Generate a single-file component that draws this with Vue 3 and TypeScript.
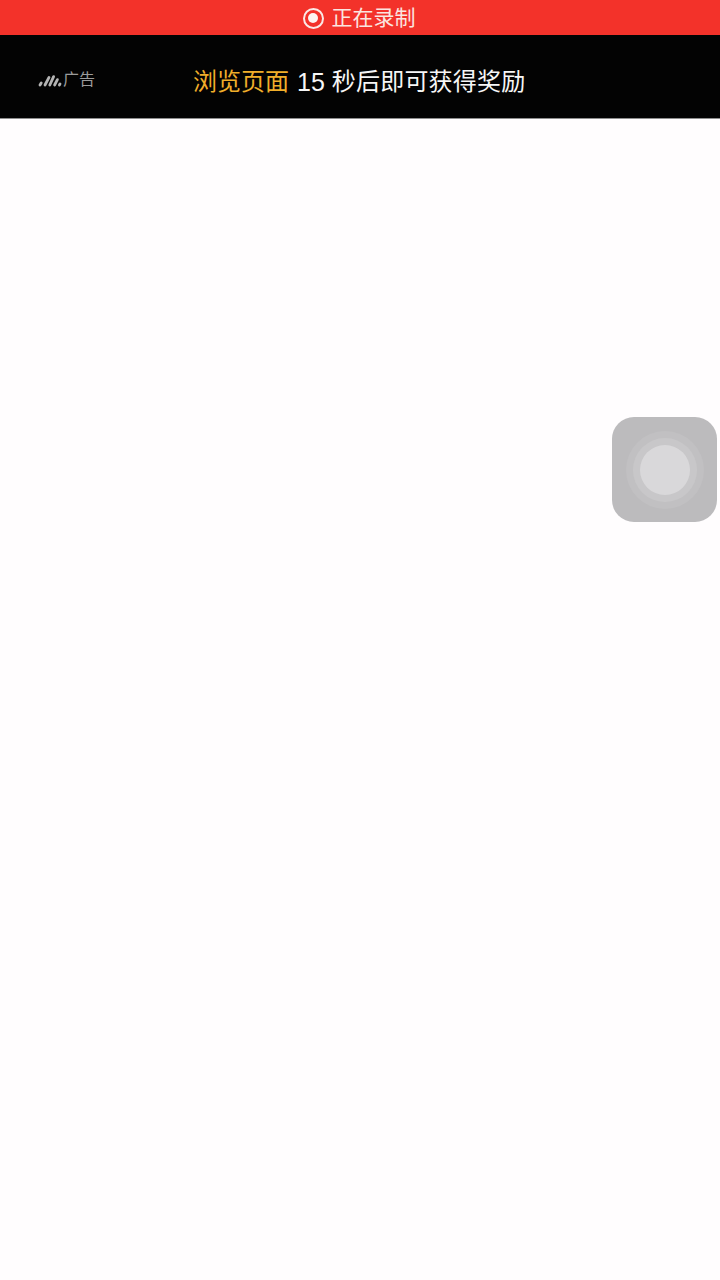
<script setup lang="ts">
const highlight: string = '浏览页面'
const count: string = '15'
const rest: string = '秒后即可获得奖励'
</script>

<template>
  <div class="page">
    <div class="rec">
      <span class="dot"></span>
      <span class="rec-text">正在录制</span>
    </div>
    <div class="ad">
      <div class="badge">
        <svg class="logo" width="24" height="13" viewBox="0 0 24 13">
          <g stroke="#b4b4b4" stroke-width="2.8" stroke-linecap="round" fill="none">
            <path d="M2 11 L3.2 9" />
            <path d="M7 11 L11 3.4" />
            <path d="M11.8 11 L15.6 2.6" />
            <path d="M16.6 11 L19.4 5.6" />
            <path d="M21.4 11 L22 10" />
          </g>
        </svg>
        <span class="badge-text">广告</span>
      </div>
      <div class="msg">
        <span class="hl">{{ highlight }}</span>
        <span class="count">{{ count }}</span>
        <span class="tail">{{ rest }}</span>
      </div>
    </div>
    <div class="body"></div>
    <div class="touch">
      <div class="ring r1"><div class="ring r2"><div class="ring r3"></div></div></div>
    </div>
  </div>
</template>

<style>
html, body { margin: 0; padding: 0; background: #fffdfe; }
</style>

<style scoped>
.page {
  position: relative;
  width: 720px;
  height: 1280px;
  overflow: hidden;
  display: flex;
  flex-direction: column;
  background: #fffdfe;
  font-family: "Liberation Sans", "Noto Sans CJK SC", sans-serif;
}
.rec {
  height: 35px;
  flex: none;
  background: #f3322a;
  display: flex;
  align-items: center;
  justify-content: center;
  gap: 8px;
  padding-right: 2px;
  padding-top: 1px;
  box-sizing: border-box;
}
.dot {
  width: 21px;
  height: 21px;
  box-sizing: border-box;
  border-radius: 50%;
  border: 2px solid #fbe9e6;
  display: flex;
  align-items: center;
  justify-content: center;
}
.dot::after {
  content: "";
  width: 10px;
  height: 10px;
  border-radius: 50%;
  background: #fdf3f0;
}
.rec-text {
  font-size: 21px;
  line-height: 24px;
  color: #fbe6e0;
}
.ad {
  height: 84px;
  flex: none;
  background: #030303;
  border-bottom: 1px solid #8e8e8e;
  box-sizing: border-box;
  display: flex;
  align-items: center;
  padding-left: 38px;
  padding-top: 10px;
}
.badge {
  width: 155px;
  display: flex;
  align-items: center;
  gap: 1px;
  flex: none;
  margin-bottom: 3px;
}
.logo { flex: none; }
.badge-text {
  font-size: 16px;
  line-height: 18px;
  color: #9b9b9b;
}
.msg {
  display: flex;
  align-items: center;
  font-size: 24px;
  line-height: 30px;
  color: #f6f6f6;
  white-space: nowrap;
}
.hl { color: #f0ae2a; }
.count { font-size: 25px; margin-left: 8px; margin-right: 7px; }
.tail { letter-spacing: 0.2px; }
.body { flex: 1; }
.touch {
  position: absolute;
  left: 612px;
  top: 417px;
  width: 105px;
  height: 105px;
  border-radius: 22px;
  background: #bcbbbd;
  display: flex;
  align-items: center;
  justify-content: center;
}
.ring {
  border-radius: 50%;
  display: flex;
  align-items: center;
  justify-content: center;
}
.r1 { width: 78px; height: 78px; background: #c1c0c2; }
.r2 { width: 64px; height: 64px; background: #c8c7c9; }
.r3 { width: 50px; height: 50px; background: #d9d8da; }
</style>
